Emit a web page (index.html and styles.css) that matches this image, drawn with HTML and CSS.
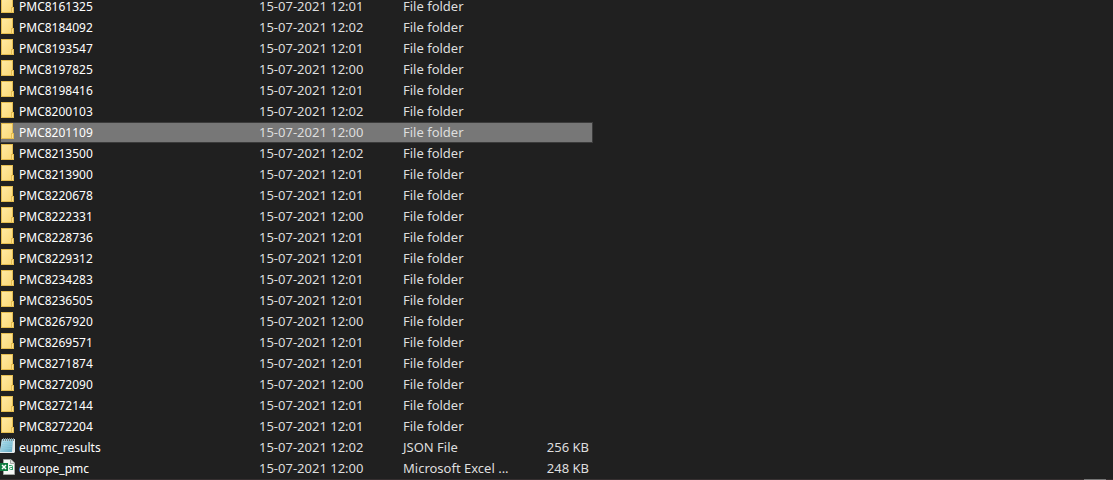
FILE: index.html
```
<!DOCTYPE html>
<html lang="en">
<head>
<meta charset="utf-8">
<title>Files</title>
<link rel="stylesheet" href="styles.css">
</head>
<body>
<svg class="sprite" aria-hidden="true">
  <defs>
    <linearGradient id="paper" x1="0" y1="0" x2="1" y2="1"><stop offset="0" stop-color="#ffe9a2"/><stop offset="1" stop-color="#fbd978"/></linearGradient>
    <linearGradient id="note" x1="0" y1="0" x2="1" y2="1"><stop offset="0" stop-color="#c4e8f3"/><stop offset="1" stop-color="#5fa9c4"/></linearGradient>
  </defs>
  <symbol id="folder" viewBox="0 0 16 16">
    <path d="M1 0H13V10H14V16H1Z" fill="#e5bd50"/>
    <path d="M2 1H12V15H2Z" fill="url(#paper)"/>
    <path d="M11 10H14V16H11Z" fill="#e5bd50"/>
    <path d="M12 11H13V15H12Z" fill="#ffe08a"/>
  </symbol>
  <symbol id="notepad" viewBox="0 0 16 16">
    <path d="M2 1H15V14L14 15H0V13Z" fill="#e4e9eb"/>
    <path d="M2 1H13L12 14H0Z" fill="url(#note)"/>
    <path d="M3 4.500H12M2 6.500H12M2 8.500H12M1 10.500H11" stroke="#8ccbe0" stroke-width="1" opacity=".6"/>
    <path d="M3.500 0V3M5.500 0V3M7.500 0V3M9.500 0V3M11.500 0V3M13.500 0V3" stroke="#7d8a90" stroke-width="1"/>
  </symbol>
  <symbol id="excel" viewBox="0 0 16 16">
    <path d="M3.500 .5H11L14.500 4V15.500H3.500Z" fill="#f5f7f5" stroke="#a2a6a3" stroke-width="1"/>
    <path d="M10.500 .5V4.500H14.500" fill="#dfe3e0" stroke="#a2a6a3" stroke-width="1"/>
    <path d="M0 4H8V12H0Z" fill="#107c41"/>
    <path d="M2 6L6 10M6 6L2 10" stroke="#fff" stroke-width="1.500"/>
    <path d="M9 6.500H11.500Q12.500 6.500 12.500 7.500V11M12.500 8.500H10.500Q9.500 8.500 9.500 9.500Q9.500 10.500 10.500 10.500H12.500" fill="none" stroke="#2fa56c" stroke-width="1"/>
  </symbol>
</svg>
<main class="explorer">
  <table class="files">
    <colgroup><col class="col-name"><col class="col-date"><col class="col-type"><col class="col-size"></colgroup>
    <tbody id="rows"></tbody>
  </table>
  <div class="scrollbar"><div class="thumb"></div></div>
</main>
<script src="files.js"></script>
</body>
</html>
```
FILE: styles.css
```
body {
  margin: 0;
  background: #202020;
  color: #dedede;
  font-family: "Segoe UI", "Noto Sans", sans-serif;
  font-size: 13px;
  line-height: 21px;
}
.sprite { position: absolute; width: 0; height: 0; }
.explorer {
  display: flex;
  flex-direction: column;
  height: 100vh;
  overflow: hidden;
  justify-content: flex-end;
}
.files {
  width: 593px;
  max-width: 100%;
  flex: none;
  table-layout: fixed;
  border-collapse: collapse;
}
.col-name { width: 259px; }
.col-date { width: 144px; }
.col-type { width: 120px; }
.files td { height: 21px; padding: 0; white-space: nowrap; }
.files .name { color: #fff; font-size: 12px; }
.files .size { text-align: right; padding-right: 4px; }
.label { display: flex; align-items: flex-start; gap: 3px; }
.icon { width: 16px; height: 16px; margin-top: 1px; flex: none; }
.selected { background: #777; outline: 1px solid #3b3b3b; outline-offset: -1px; }
.scrollbar { flex: none; height: 1px; padding-right: 7px; background: #352f30; }
.thumb { width: 22px; height: 1px; margin-left: auto; background: #777; }
```
FILE: files.js
```
const folders = [
  ["PMC8161325", "12:01"], ["PMC8184092", "12:02"], ["PMC8193547", "12:01"],
  ["PMC8197825", "12:00"], ["PMC8198416", "12:01"], ["PMC8200103", "12:02"],
  ["PMC8201109", "12:00"], ["PMC8213500", "12:02"], ["PMC8213900", "12:01"],
  ["PMC8220678", "12:01"], ["PMC8222331", "12:00"], ["PMC8228736", "12:01"],
  ["PMC8229312", "12:01"], ["PMC8234283", "12:01"], ["PMC8236505", "12:01"],
  ["PMC8267920", "12:00"], ["PMC8269571", "12:01"], ["PMC8271874", "12:01"],
  ["PMC8272090", "12:00"], ["PMC8272144", "12:01"], ["PMC8272204", "12:01"]
];
const files = folders.map(([name, time]) => [name, time, "File folder", "", "folder"]);
files.push(["eupmc_results", "12:02", "JSON File", "256 KB", "notepad"]);
files.push(["europe_pmc", "12:00", "Microsoft Excel ...", "248 KB", "excel"]);

document.getElementById("rows").innerHTML = files.map(([name, time, type, size, icon]) => `
  <tr${name === "PMC8201109" ? ' class="selected"' : ""}>
    <td class="name"><div class="label"><svg class="icon" aria-hidden="true"><use href="#${icon}"/></svg><span>${name}</span></div></td>
    <td>15-07-2021 ${time}</td>
    <td>${type}</td>
    <td class="size">${size}</td>
  </tr>`).join("");
```
